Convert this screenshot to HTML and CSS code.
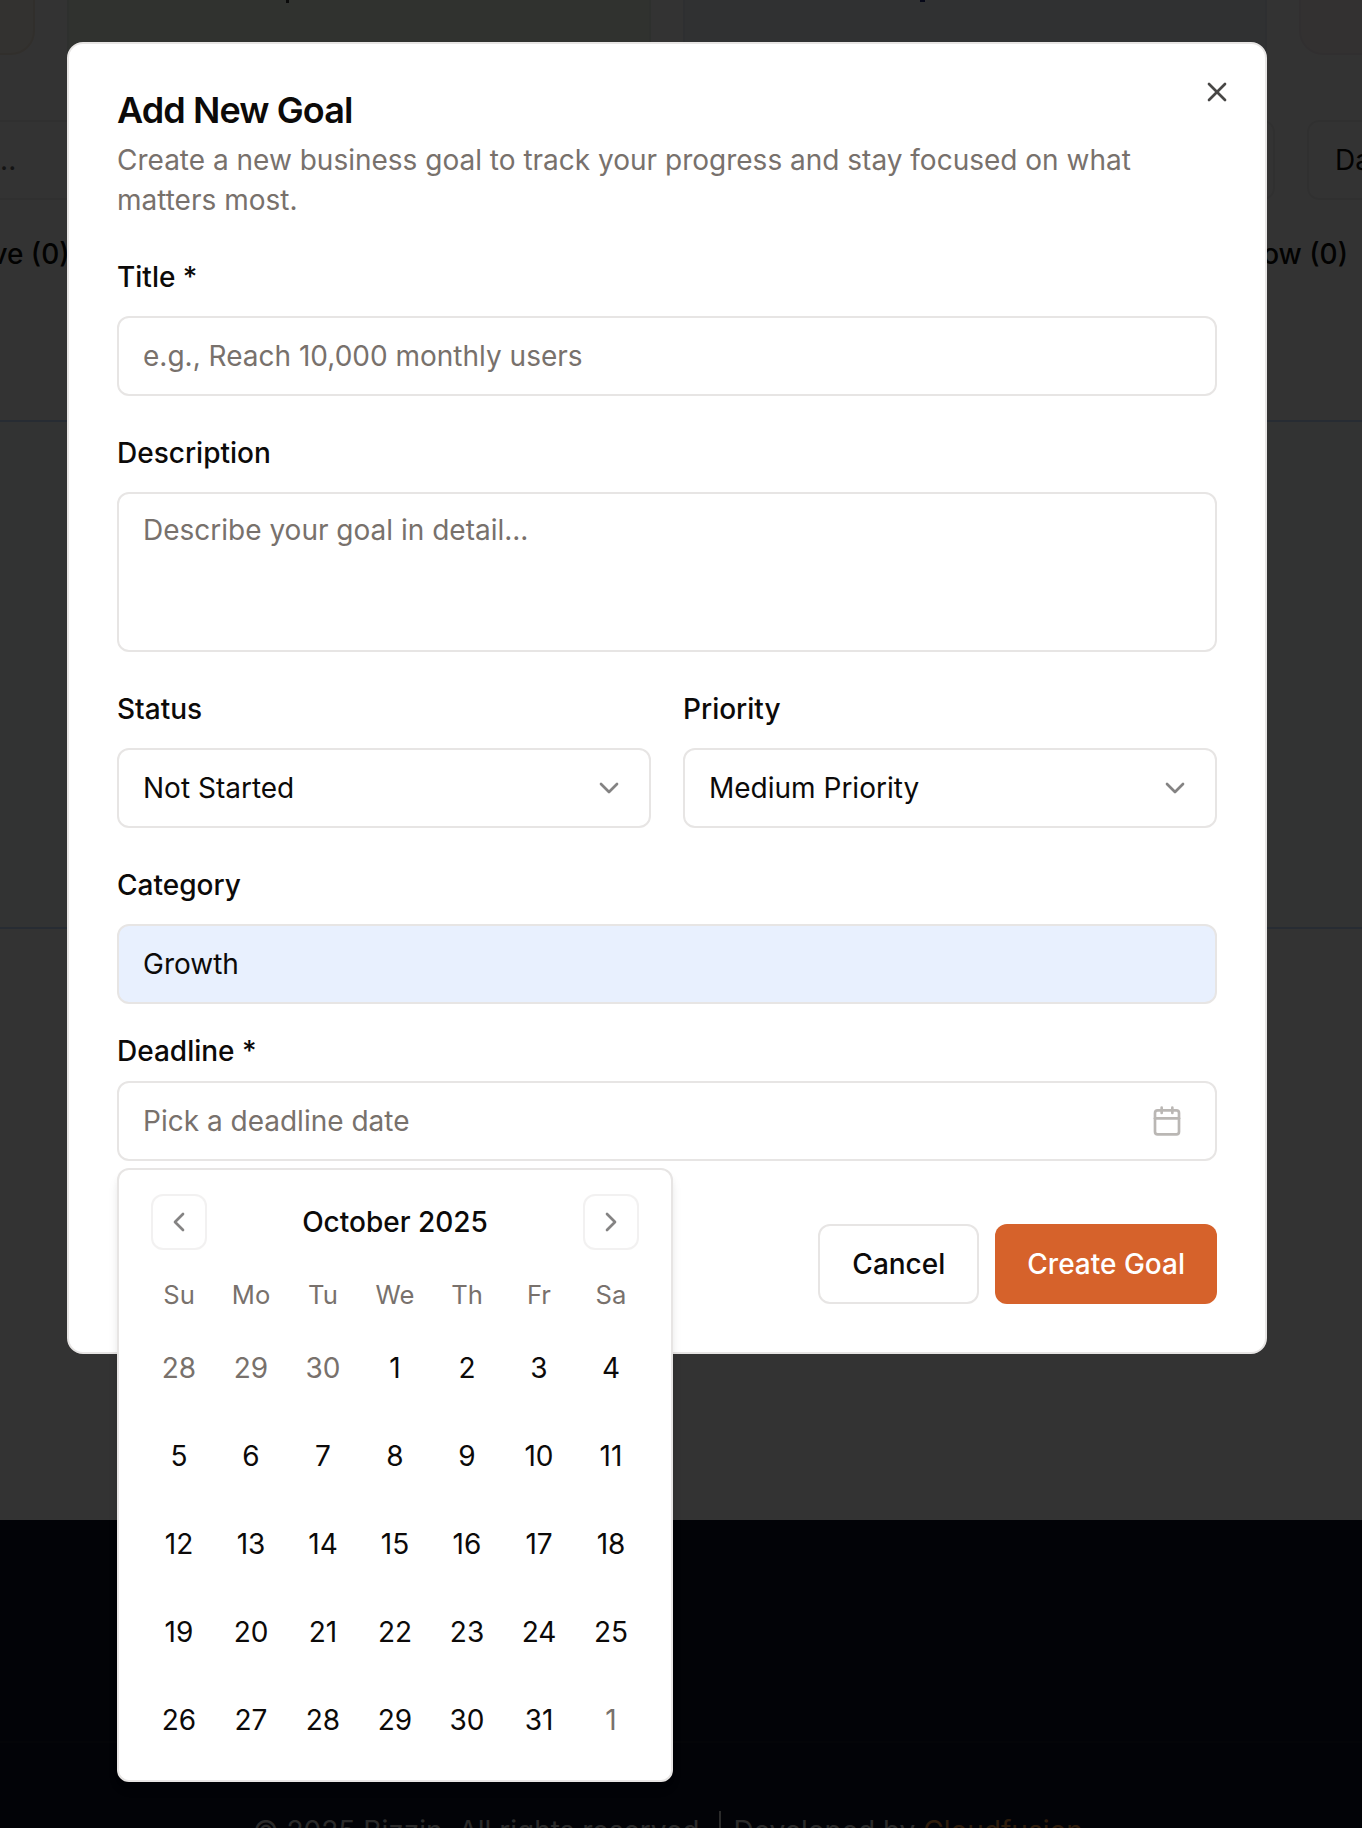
FILE: index.html
```html
<!DOCTYPE html>
<html>
    <head>
        <meta charset="utf-8">
        <title>Add New Goal</title>
        <link rel="stylesheet" href="styles.css">
    </head>
    <body>
        <div id="page">
            <div class="cards">
                <div class="card card-orange"></div>
                <div class="card card-green"><span class="card-mark"></span></div>
                <div class="card card-blue"><span class="card-mark card-mark-blue"></span></div>
                <div class="card card-rose"></div>
            </div>
            <div class="filters">
                <div class="filter filter-search">...</div>
                <div class="filter filter-date">Date</div>
            </div>
            <div class="tabs">
                <span>Active (0)</span>
                <span>Low (0)</span>
            </div>
            <div class="panel"></div>
            <div class="footer">
                <div class="footer-top"></div>
                <div class="footer-line">
                    <span>© 2025 Bizzin. All rights reserved.</span>
                    <span class="footer-divider"></span>
                    <span>Developed by <span class="footer-link">Cloudfusion</span></span>
                </div>
            </div>
        </div>

        <div id="overlay"></div>

        <div id="modal">
            <svg class="icon close-icon" viewBox="0 0 24 24"><path d="M18 6 6 18"/><path d="m6 6 12 12"/></svg>
            <h2 class="modal-title">Add New Goal</h2>
            <p class="modal-desc">Create a new business goal to track your progress and stay focused on what matters most.</p>

            <div class="group">
                <div class="label">Title *</div>
                <div class="field placeholder">e.g., Reach 10,000 monthly users</div>
            </div>
            <div class="group">
                <div class="label">Description</div>
                <div class="field field-area placeholder">Describe your goal in detail...</div>
            </div>
            <div class="group two-cols">
                <div>
                    <div class="label">Status</div>
                    <div class="field field-select">
                        Not Started
                        <svg class="icon select-icon" viewBox="0 0 24 24"><path d="m6 9 6 6 6-6"/></svg>
                    </div>
                </div>
                <div>
                    <div class="label">Priority</div>
                    <div class="field field-select">
                        Medium Priority
                        <svg class="icon select-icon" viewBox="0 0 24 24"><path d="m6 9 6 6 6-6"/></svg>
                    </div>
                </div>
            </div>
            <div class="group">
                <div class="label">Category</div>
                <div class="field field-filled">Growth</div>
            </div>
            <div class="group group-deadline">
                <div class="label">Deadline *</div>
                <div class="field field-select placeholder">
                    Pick a deadline date
                    <svg class="icon select-icon date-icon" viewBox="0 0 24 24"><path d="M8 2v4"/><path d="M16 2v4"/><rect x="3" y="4" width="18" height="18" rx="2"/><path d="M3 10h18"/></svg>
                </div>

                <div id="calendar">
                    <div class="cal-head">
                        <div class="cal-nav"><svg class="icon" viewBox="0 0 24 24"><path d="m15 18-6-6 6-6"/></svg></div>
                        <div class="cal-month">October 2025</div>
                        <div class="cal-nav"><svg class="icon" viewBox="0 0 24 24"><path d="m9 18 6-6-6-6"/></svg></div>
                    </div>
                    <div class="cal-week">
                        <span>Su</span><span>Mo</span><span>Tu</span><span>We</span><span>Th</span><span>Fr</span><span>Sa</span>
                    </div>
                    <div class="cal-days">
                        <span class="out">28</span><span class="out">29</span><span class="out">30</span><span>1</span><span>2</span><span>3</span><span>4</span>
                        <span>5</span><span>6</span><span>7</span><span>8</span><span>9</span><span>10</span><span>11</span>
                        <span>12</span><span>13</span><span>14</span><span>15</span><span>16</span><span>17</span><span>18</span>
                        <span>19</span><span>20</span><span>21</span><span>22</span><span>23</span><span>24</span><span>25</span>
                        <span>26</span><span>27</span><span>28</span><span>29</span><span>30</span><span>31</span><span class="out">1</span>
                    </div>
                </div>
            </div>

            <div class="modal-foot">
                <div class="btn btn-cancel">Cancel</div>
                <div class="btn btn-create">Create Goal</div>
            </div>
        </div>
    </body>
</html>
```

FILE: styles.css
```css
* {
    box-sizing: border-box;
}
body {
    margin: 0;
    font-family: "Inter", "Liberation Sans", sans-serif;
    color: #0c0a09;
    background: #ffffff;
}
#page {
    height: 1828px;
    overflow: hidden;
    background: #ffffff;
}
#overlay {
    position: absolute;
    top: 0;
    left: 0;
    width: 1362px;
    height: 1828px;
    background: rgba(0, 0, 0, 0.8);
}

/* page behind the dialog */
.cards {
    display: flex;
    gap: 32px;
    height: 55px;
    margin-left: -549px;
}
.card {
    flex: 0 0 584px;
    height: 55px;
    border: 2px solid #eeeeee;
    border-top: 0;
    border-radius: 0 0 24px 24px;
}
.card-orange { background: #fff7ed; border-color: #f5ead9; }
.card-green { background: #eef8ea; border-color: #e6f0e4; border-radius: 0; }
.card-blue { background: #eef3fb; border-color: #e6ebf5; border-radius: 0; }
.card-rose { background: #fdf6f6; border-color: #f3eaee; }
.card-mark {
    display: block;
    width: 3px;
    height: 3px;
    margin-left: 217px;
    background: #333333;
}
.card-mark-blue {
    width: 5px;
    height: 2px;
    margin-left: 235px;
    background: #1e2a78;
}
.filters {
    display: flex;
    gap: 32px;
    margin-top: 65px;
    margin-left: -20px;
    width: 1582px;
    font-size: 28px;
}
.filter {
    height: 80px;
    line-height: 76px;
    padding: 0 26px;
    border: 2px solid #f0f0f0;
    border-radius: 12px;
}
.filter-search {
    width: 1295px;
    padding-left: 10px;
    color: #666666;
}
.filter-date {
    width: 255px;
}
.tabs {
    display: flex;
    justify-content: space-between;
    width: 1600px;
    margin-top: 34px;
    margin-left: -61px;
    padding-right: 191px;
    font-size: 28px;
    font-weight: 500;
    line-height: 40px;
}
.panel {
    height: 509px;
    margin-top: 146px;
    background: #fbfcff;
    border-top: 2px solid #c2dbff;
    border-bottom: 2px solid #c2dbff;
}
.footer {
    height: 308px;
    margin-top: 591px;
    background: #0c1024;
    color: #d6d6d6;
    font-size: 28px;
    line-height: 40px;
}
.footer-top {
    height: 223px;
    border-bottom: 2px solid #161a2c;
}
.footer-line {
    display: flex;
    align-items: center;
    gap: 12px;
    padding: 68px 0 0 253px;
    white-space: nowrap;
}
.footer-divider {
    width: 2px;
    height: 40px;
    background: #d6d6d6;
}
.footer-link {
    color: #e8913f;
}

/* dialog */
#modal {
    position: absolute;
    top: 42px;
    left: 67px;
    width: 1200px;
    height: 1312px;
    padding: 48px;
    background: #ffffff;
    border: 2px solid #e7e5e4;
    border-radius: 16px;
}
.icon {
    display: block;
    width: 32px;
    height: 32px;
    fill: none;
    stroke: currentColor;
    stroke-width: 2;
    stroke-linecap: round;
    stroke-linejoin: round;
}
.close-icon {
    position: absolute;
    top: 32px;
    right: 32px;
    opacity: 0.75;
}
.modal-title {
    margin: 0;
    font-size: 36px;
    font-weight: 600;
    line-height: 36px;
    letter-spacing: -0.9px;
}
.modal-desc {
    margin: 12px 0 0;
    font-size: 28px;
    line-height: 40px;
    color: #78716c;
}
.group {
    margin-top: 43px;
}
.group-deadline {
    position: relative;
    margin-top: 33px;
}
.group-deadline .label {
    margin-bottom: 16px;
}
.two-cols {
    display: grid;
    grid-template-columns: 1fr 1fr;
    column-gap: 32px;
}
.label {
    margin-bottom: 25px;
    font-size: 28px;
    font-weight: 500;
    line-height: 28px;
}
.field {
    height: 80px;
    padding: 0 24px;
    font-size: 28px;
    line-height: 76px;
    background: #ffffff;
    border: 2px solid #e7e5e4;
    border-radius: 12px;
}
.placeholder {
    color: #78716c;
}
.field-area {
    height: 160px;
    padding-top: 16px;
    line-height: 40px;
}
.field-select {
    display: flex;
    align-items: center;
    justify-content: space-between;
}
.select-icon {
    opacity: 0.5;
}
.date-icon {
    margin-right: 8px;
}
.field-filled {
    background: #e8f0fe;
}

/* date picker */
#calendar {
    position: absolute;
    top: 131px;
    left: 0;
    width: 556px;
    height: 614px;
    padding: 24px;
    background: #ffffff;
    border: 2px solid #e7e5e4;
    border-radius: 12px;
    box-shadow: 0 8px 12px -2px rgba(0, 0, 0, 0.1), 0 4px 8px -4px rgba(0, 0, 0, 0.1);
    z-index: 2;
}
.cal-head {
    display: flex;
    align-items: center;
    justify-content: space-between;
    height: 56px;
    padding: 0 8px;
}
.cal-month {
    font-size: 28px;
    font-weight: 500;
}
.cal-nav {
    display: flex;
    align-items: center;
    justify-content: center;
    width: 56px;
    height: 56px;
    color: #0c0a09;
    border: 2px solid #e7e5e4;
    border-radius: 12px;
    opacity: 0.5;
}
.cal-week {
    display: grid;
    grid-template-columns: repeat(7, 72px);
    height: 26px;
    margin-top: 32px;
    font-size: 25.6px;
    line-height: 26px;
    text-align: center;
    color: #78716c;
}
.cal-days {
    display: grid;
    grid-template-columns: repeat(7, 72px);
    grid-auto-rows: 72px;
    row-gap: 16px;
    margin-top: 24px;
    font-size: 28px;
    line-height: 72px;
    text-align: center;
}
.out {
    color: #78716c;
}
.modal-foot {
    display: flex;
    justify-content: flex-end;
    gap: 16px;
    margin-top: 63px;
}
.btn {
    height: 80px;
    padding: 0 32px;
    font-size: 28px;
    font-weight: 500;
    line-height: 76px;
    border: 2px solid #e7e5e4;
    border-radius: 12px;
}
.btn-create {
    line-height: 80px;
    color: #ffffff;
    background: #d6622b;
    border: 0;
}
```
